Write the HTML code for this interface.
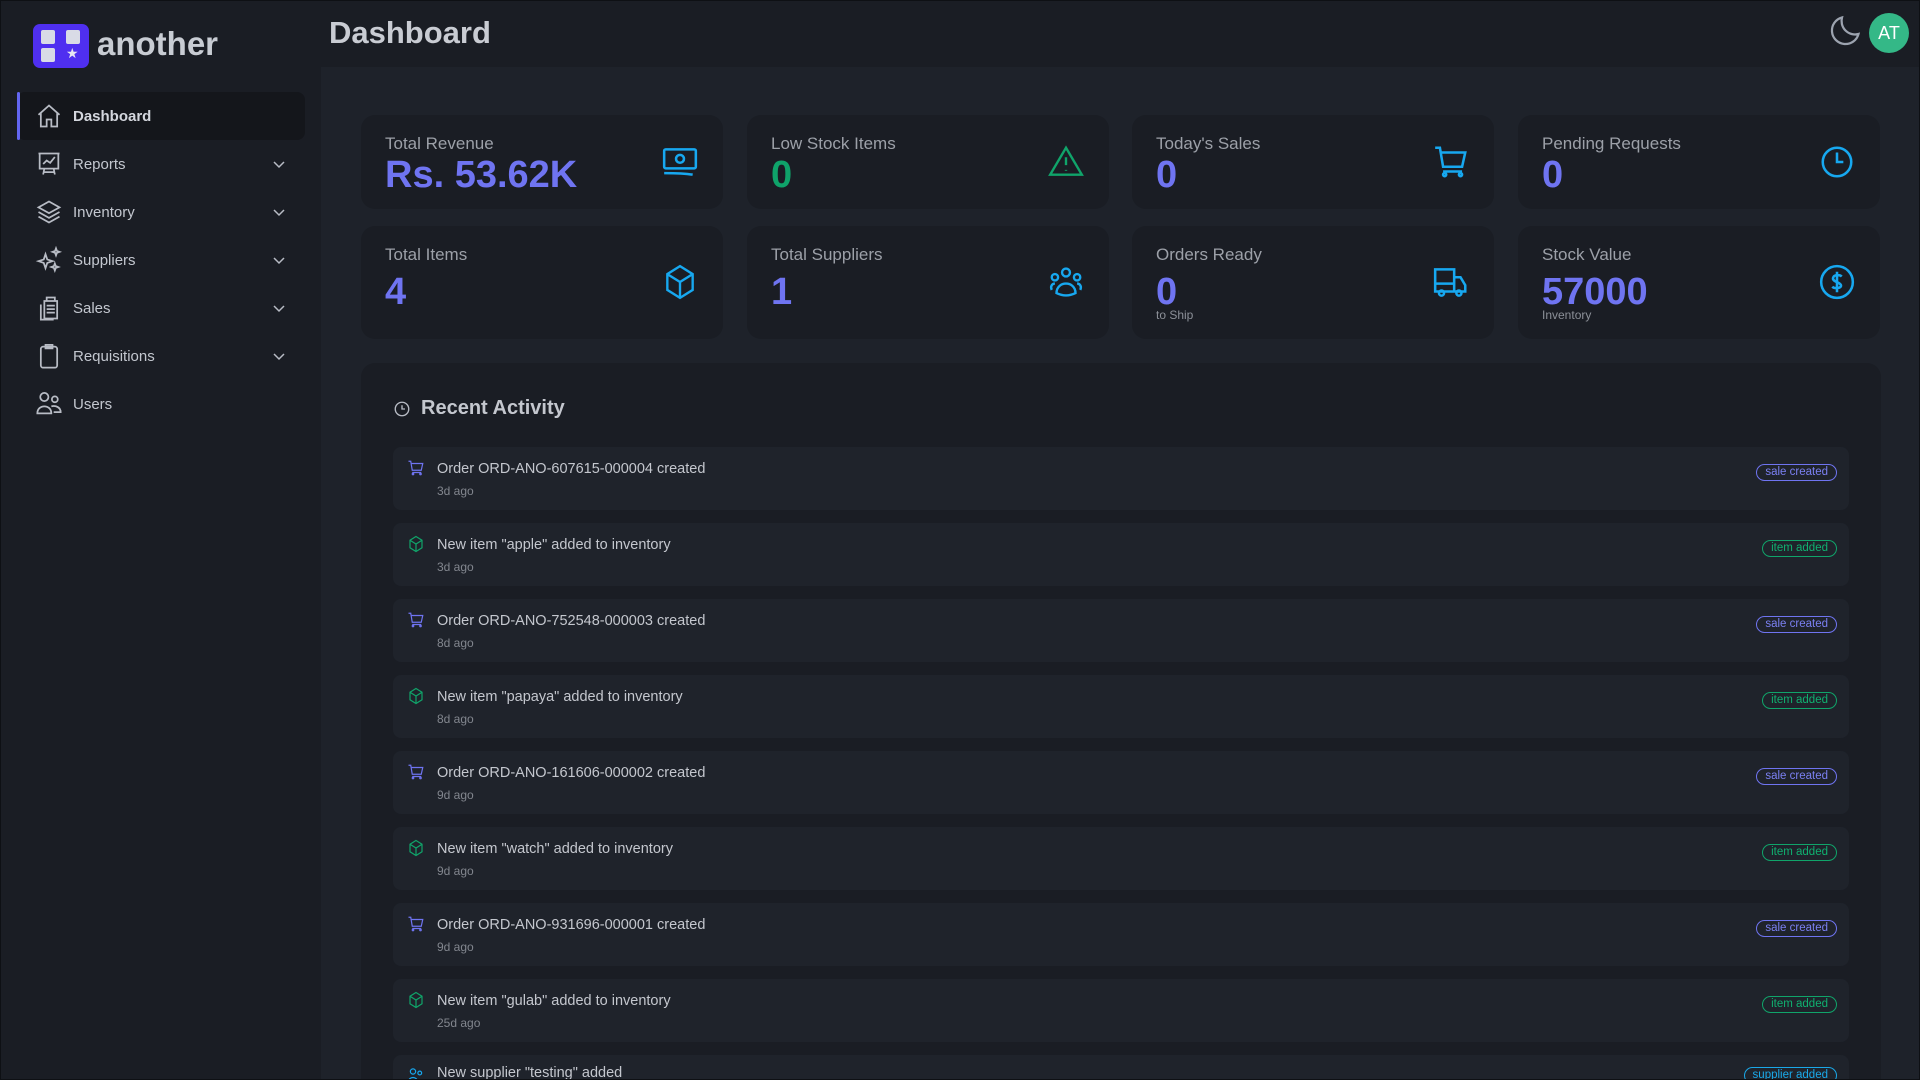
<!DOCTYPE html>
<html><head><meta charset="utf-8"><style>
*{box-sizing:border-box;margin:0;padding:0}
html,body{width:1920px;height:1080px;overflow:hidden}
body{background:#1e222a;font-family:"Liberation Sans",sans-serif}
#w{position:relative;width:1920px;height:1080px;overflow:hidden;border:1px solid #0e1014}
.sb{position:absolute;left:0;top:0;width:320px;height:1080px;background:#1a1d24}
.hd{position:absolute;left:320px;top:0;width:1600px;height:66px;background:#1a1d24}
.logo{position:absolute;left:32px;top:23px;width:56px;height:44px;border-radius:7px;background:#4f2ff0}
.logo i{position:absolute;width:14px;height:14px;background:#d9dbe6;border-radius:2px}
.brand{position:absolute;left:96px;top:24px;font-size:33px;font-weight:bold;color:#c8ccd3}
.nav{position:absolute;left:16px;width:288px;height:48px;display:flex;align-items:center;color:#c3c7cf;font-size:15px}
.nav svg{position:absolute;left:18px;width:28px;height:28px}
.nav span{position:absolute;left:56px}
.nav .ch{position:absolute;left:254px;width:16px;height:16px}
.act{background:#14161b;border-radius:8px;font-weight:bold;color:#d4d7de}
.act:before{content:"";position:absolute;left:0;top:0;width:3px;height:48px;background:#6366f1;border-radius:2px}
.title{position:absolute;left:328px;top:14px;font-size:31px;font-weight:bold;color:#c9ccd3}
.card{position:absolute;width:362px;background:#1a1d24;border-radius:14px}
.card .l{position:absolute;left:24px;font-size:17px;color:#9ca0a8}
.card .v{position:absolute;left:24px;font-size:38px;font-weight:bold;color:#6f74f1}
.card .s{position:absolute;left:24px;font-size:12px;color:#8c9098}
.card svg{position:absolute;right:24px;width:38px;height:38px}
.panel{position:absolute;left:360px;top:362px;width:1520px;height:718px;background:#1a1d24;border-radius:14px 14px 0 0;overflow:hidden}
.it{position:absolute;left:32px;width:1456px;height:63px;background:#1f232b;border-radius:8px}
.it svg{position:absolute;left:14px;top:12px;width:18px;height:18px}
.it .t{position:absolute;left:44px;top:14px;font-size:14.5px;color:#c4c7ce}
.it .d{position:absolute;left:44px;top:37px;font-size:12px;color:#82868e}
.bd{position:absolute;right:12px;top:17px;height:17px;padding:0 8px;border-radius:9px;border:1.5px solid;font-size:11.5px;line-height:14px}
.sale{color:#7b80f2;border-color:#6f74f1}
.item{color:#10b070;border-color:#10a46a}
.sup{color:#1aa8e8;border-color:#1aa8e8}
</style></head><body><div id="w">
<div class="sb"></div><div class="hd"></div>
<div class="logo"><i style="left:8px;top:6px"></i><i style="left:33px;top:6px"></i><i style="left:8px;top:24px"></i><span style="position:absolute;left:33px;top:21px;color:#e6e6f2;font-size:14px">★</span></div>
<div class="brand">another</div>

<div class="nav act" style="top:91px"><svg viewBox="0 0 24 24" fill="none" stroke="#b8bcc5" stroke-width="1.5"><path d="M3 11l9-8 9 8M5 9.5V21h5v-6h4v6h5V9.5"/></svg><span>Dashboard</span></div>
<div class="nav" style="top:139px"><svg viewBox="0 0 24 24" fill="none" stroke="#b8bcc5" stroke-width="1.5"><path d="M3 3h18M4 3v13h16V3M7 12l3-3 3 2 4-5M8 16l-1 5M16 16l1 5M7 19h10"/></svg><span>Reports</span><svg class="ch" viewBox="0 0 16 16" fill="none" stroke="#b8bcc5" stroke-width="1.5"><path d="M3 6l5 5 5-5"/></svg></div>
<div class="nav" style="top:187px"><svg viewBox="0 0 24 24" fill="none" stroke="#b8bcc5" stroke-width="1.5"><path d="M12 3l9 5-9 5-9-5 9-5zM3 12l9 5 9-5M3 16l9 5 9-5"/></svg><span>Inventory</span><svg class="ch" viewBox="0 0 16 16" fill="none" stroke="#b8bcc5" stroke-width="1.5"><path d="M3 6l5 5 5-5"/></svg></div>
<div class="nav" style="top:235px"><svg viewBox="0 0 24 24" fill="none" stroke="#b8bcc5" stroke-width="1.5"><path d="M9 7l1.5 4.5L15 13l-4.5 1.5L9 19l-1.5-4.5L3 13l4.5-1.5zM18 2l.8 2.2L21 5l-2.2.8L18 8l-.8-2.2L15 5l2.2-.8zM17 15l.8 2.2L20 18l-2.2.8L17 21l-.8-2.2L14 18l2.2-.8z"/></svg><span>Suppliers</span><svg class="ch" viewBox="0 0 16 16" fill="none" stroke="#b8bcc5" stroke-width="1.5"><path d="M3 6l5 5 5-5"/></svg></div>
<div class="nav" style="top:283px"><svg viewBox="0 0 24 24" fill="none" stroke="#b8bcc5" stroke-width="1.5"><path d="M8 6h11v15H8zM5 9v13h11M10 3h7v3h-7zM10 10h7M10 13h7M10 16h7"/></svg><span>Sales</span><svg class="ch" viewBox="0 0 16 16" fill="none" stroke="#b8bcc5" stroke-width="1.5"><path d="M3 6l5 5 5-5"/></svg></div>
<div class="nav" style="top:331px"><svg viewBox="0 0 24 24" fill="none" stroke="#b8bcc5" stroke-width="1.5"><rect x="5" y="4" width="14" height="18" rx="2"/><path d="M9 2.5h6v3H9z"/></svg><span>Requisitions</span><svg class="ch" viewBox="0 0 16 16" fill="none" stroke="#b8bcc5" stroke-width="1.5"><path d="M3 6l5 5 5-5"/></svg></div>
<div class="nav" style="top:379px"><svg viewBox="0 0 24 24" fill="none" stroke="#b8bcc5" stroke-width="1.5"><circle cx="8" cy="6" r="3.5"/><circle cx="17" cy="8" r="2.5"/><path d="M2 20c0-4 3-6 6-6s6 2 6 6zM14 14c4-1 8 1 8 5h-6"/></svg><span>Users</span></div>

<div class="title">Dashboard</div>
<svg style="position:absolute;left:1826px;top:12px" width="36" height="36" viewBox="0 0 24 24" fill="none" stroke="#9ca3af" stroke-width="1.5"><path d="M21 14A9 9 0 0 1 10 3a9 9 0 1 0 11 11z"/></svg>
<div style="position:absolute;left:1868px;top:12px;width:40px;height:40px;border-radius:50%;background:#34b887;color:#fff;font-size:18px;text-align:center;line-height:40px">AT</div>

<div class="card" style="left:360px;top:114px;height:94px"><div class="l" style="top:19px">Total Revenue</div><div class="v" style="top:39px">Rs. 53.62K</div><svg style="top:28px" viewBox="0 0 24 24" fill="none" stroke="#17a8f0" stroke-width="1.6"><rect x="2" y="4" width="20" height="12" rx="1"/><circle cx="12" cy="10" r="2.5"/><path d="M2 19c6 0 12 0 18 1M5 10h.01M19 10h.01"/></svg></div>
<div class="card" style="left:746px;top:114px;height:94px"><div class="l" style="top:19px">Low Stock Items</div><div class="v" style="top:39px;color:#0fa36a">0</div><svg style="top:28px" viewBox="0 0 24 24" fill="none" stroke="#10a46a" stroke-width="1.5"><path d="M12 3L2 20h20zM12 9v5M12 17v.5"/></svg></div>
<div class="card" style="left:1131px;top:114px;height:94px"><div class="l" style="top:19px">Today's Sales</div><div class="v" style="top:39px">0</div><svg style="top:28px" viewBox="0 0 24 24" fill="none" stroke="#17a8f0" stroke-width="1.6"><path d="M2 3h3l2 12h12l2-9H6M7 18h12"/><circle cx="8" cy="20" r="1"/><circle cx="18" cy="20" r="1"/></svg></div>
<div class="card" style="left:1517px;top:114px;height:94px"><div class="l" style="top:19px">Pending Requests</div><div class="v" style="top:39px">0</div><svg style="top:28px" viewBox="0 0 24 24" fill="none" stroke="#17a8f0" stroke-width="1.6"><circle cx="12" cy="12" r="9"/><path d="M12 6v6h4"/></svg></div>

<div class="card" style="left:360px;top:225px;height:113px"><div class="l" style="top:19px">Total Items</div><div class="v" style="top:45px">4</div><svg style="top:37px" viewBox="0 0 24 24" fill="none" stroke="#17a8f0" stroke-width="1.5"><path d="M12 2l8 5v10l-8 5-8-5V7zM4 7l8 5 8-5M12 12v10"/></svg></div>
<div class="card" style="left:746px;top:225px;height:113px"><div class="l" style="top:19px">Total Suppliers</div><div class="v" style="top:45px">1</div><svg style="top:37px" viewBox="0 0 24 24" fill="none" stroke="#17a8f0" stroke-width="1.5"><circle cx="12" cy="6" r="2.5"/><circle cx="5" cy="9" r="2"/><circle cx="19" cy="9" r="2"/><path d="M6 19c0-4 3-6 6-6s6 2 6 6c-4 2-8 2-12 0zM3 17c-1-2 0-4 2-4M21 17c1-2 0-4-2-4"/></svg></div>
<div class="card" style="left:1131px;top:225px;height:113px"><div class="l" style="top:19px">Orders Ready</div><div class="v" style="top:45px">0</div><div class="s" style="top:82px">to Ship</div><svg style="top:37px" viewBox="0 0 24 24" fill="none" stroke="#17a8f0" stroke-width="1.6"><path d="M2 4h12v14H2zM14 9h4l3 5v4h-7M2 13h12"/><circle cx="6" cy="19" r="1.6"/><circle cx="17" cy="19" r="1.6"/></svg></div>
<div class="card" style="left:1517px;top:225px;height:113px"><div class="l" style="top:19px">Stock Value</div><div class="v" style="top:45px">57000</div><div class="s" style="top:82px">Inventory</div><svg style="top:37px" viewBox="0 0 24 24" fill="none" stroke="#17a8f0" stroke-width="1.6"><circle cx="12" cy="12" r="10"/><path d="M15 8.5c-1-1-5-1.5-5.5 1S14 12 14.5 14s-4 2.5-5.5 1M12 5.5v13"/></svg></div>

<div class="panel">
<svg style="position:absolute;left:32px;top:37px" width="18" height="18" viewBox="0 0 24 24" fill="none" stroke="#b8bcc5" stroke-width="1.8"><circle cx="12" cy="12" r="9"/><path d="M12 7v5h4"/></svg>
<div style="position:absolute;left:60px;top:34px;font-size:20px;font-weight:bold;color:#c4c7ce">Recent Activity</div>
<div class="it" style="top:84px"><svg viewBox="0 0 24 24" fill="none" stroke="#6f74f1" stroke-width="1.6"><path d="M2 3h3l2 12h12l2-9H6M7 18h12"/><circle cx="8" cy="20" r="1"/><circle cx="18" cy="20" r="1"/></svg><div class="t">Order ORD-ANO-607615-000004 created</div><div class="d">3d ago</div><div class="bd sale">sale created</div></div>
<div class="it" style="top:160px"><svg viewBox="0 0 24 24" fill="none" stroke="#10a46a" stroke-width="1.6"><path d="M12 2l8 5v10l-8 5-8-5V7zM4 7l8 5 8-5M12 12v10"/></svg><div class="t">New item "apple" added to inventory</div><div class="d">3d ago</div><div class="bd item">item added</div></div>
<div class="it" style="top:236px"><svg viewBox="0 0 24 24" fill="none" stroke="#6f74f1" stroke-width="1.6"><path d="M2 3h3l2 12h12l2-9H6M7 18h12"/><circle cx="8" cy="20" r="1"/><circle cx="18" cy="20" r="1"/></svg><div class="t">Order ORD-ANO-752548-000003 created</div><div class="d">8d ago</div><div class="bd sale">sale created</div></div>
<div class="it" style="top:312px"><svg viewBox="0 0 24 24" fill="none" stroke="#10a46a" stroke-width="1.6"><path d="M12 2l8 5v10l-8 5-8-5V7zM4 7l8 5 8-5M12 12v10"/></svg><div class="t">New item "papaya" added to inventory</div><div class="d">8d ago</div><div class="bd item">item added</div></div>
<div class="it" style="top:388px"><svg viewBox="0 0 24 24" fill="none" stroke="#6f74f1" stroke-width="1.6"><path d="M2 3h3l2 12h12l2-9H6M7 18h12"/><circle cx="8" cy="20" r="1"/><circle cx="18" cy="20" r="1"/></svg><div class="t">Order ORD-ANO-161606-000002 created</div><div class="d">9d ago</div><div class="bd sale">sale created</div></div>
<div class="it" style="top:464px"><svg viewBox="0 0 24 24" fill="none" stroke="#10a46a" stroke-width="1.6"><path d="M12 2l8 5v10l-8 5-8-5V7zM4 7l8 5 8-5M12 12v10"/></svg><div class="t">New item "watch" added to inventory</div><div class="d">9d ago</div><div class="bd item">item added</div></div>
<div class="it" style="top:540px"><svg viewBox="0 0 24 24" fill="none" stroke="#6f74f1" stroke-width="1.6"><path d="M2 3h3l2 12h12l2-9H6M7 18h12"/><circle cx="8" cy="20" r="1"/><circle cx="18" cy="20" r="1"/></svg><div class="t">Order ORD-ANO-931696-000001 created</div><div class="d">9d ago</div><div class="bd sale">sale created</div></div>
<div class="it" style="top:616px"><svg viewBox="0 0 24 24" fill="none" stroke="#10a46a" stroke-width="1.6"><path d="M12 2l8 5v10l-8 5-8-5V7zM4 7l8 5 8-5M12 12v10"/></svg><div class="t">New item "gulab" added to inventory</div><div class="d">25d ago</div><div class="bd item">item added</div></div>
<div class="it" style="top:692px"><svg viewBox="0 0 24 24" fill="none" stroke="#17a8f0" stroke-width="1.6"><circle cx="8" cy="6" r="3.5"/><circle cx="17" cy="8" r="2.5"/><path d="M2 20c0-4 3-6 6-6s6 2 6 6z"/></svg><div class="t" style="top:10px">New supplier "testing" added</div><div class="bd sup" style="top:12px">supplier added</div></div>
</div>
</div></body></html>
